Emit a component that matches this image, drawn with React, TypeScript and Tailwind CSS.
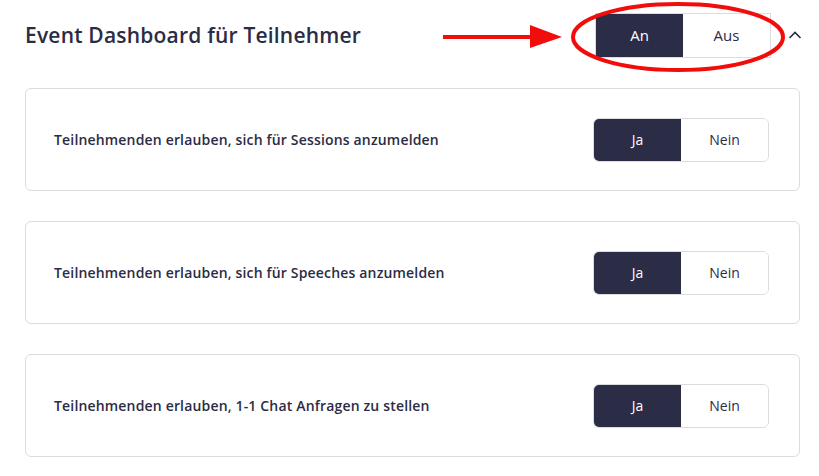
import React from "react";

const options = [
  "Teilnehmenden erlauben, sich für Sessions anzumelden",
  "Teilnehmenden erlauben, sich für Speeches anzumelden",
  "Teilnehmenden erlauben, 1-1 Chat Anfragen zu stellen",
];

function Toggle({ on, off }: { on: string; off: string }) {
  return (
    <div className="flex h-[44px] w-[176px] border border-[#dcdcdc] rounded-[6px] overflow-hidden text-[14px]">
      <button className="flex-1 bg-[#2b2c45] text-white">{on}</button>
      <button className="flex-1 bg-white text-[#2b2c45]">{off}</button>
    </div>
  );
}

export default function App() {
  return (
    <div className="relative min-h-screen bg-white pl-[25px] pr-[19px] pt-[13px] font-['Open_Sans',sans-serif] text-[#2b2c45]">
      {/* header */}
      <div className="flex items-center h-[45px]">
        <h1 className="text-[21px] font-semibold tracking-[0.2px]">Event Dashboard für Teilnehmer</h1>
        <div className="ml-auto flex items-center">
          <div className="flex h-[45px] w-[176px] border border-[#dcdcdc] text-[15px]">
            <button className="flex-1 bg-[#2b2c45] text-white">An</button>
            <button className="flex-1 bg-white text-[#2b2c45]">Aus</button>
          </div>
          <svg width="14" height="10" viewBox="0 0 14 10" className="ml-[17px] mr-[-2px] mb-[2px]">
            <path d="M1.5 8 L7 2.5 L12.5 8" fill="none" stroke="#2b2c45" strokeWidth="1.6" />
          </svg>
        </div>
      </div>

      {/* cards */}
      <div className="mt-[30px] flex flex-col gap-[30px]">
        {options.map((label) => (
          <div
            key={label}
            className="flex items-center justify-between h-[103px] rounded-[6px] border border-[#dcdcdc] pl-[28px] pr-[30px]"
          >
            <span className="text-[14px] font-semibold tracking-[0.17px]">{label}</span>
            <Toggle on="Ja" off="Nein" />
          </div>
        ))}
      </div>

      {/* annotation overlay */}
      <svg className="absolute left-0 top-0 pointer-events-none" width="819" height="90">
        <line x1="443" y1="37" x2="532" y2="37" stroke="#f20d0d" strokeWidth="4" />
        <polygon points="530,25 562,37 530,48" fill="#f20d0d" />
        <ellipse cx="678" cy="37" rx="105" ry="33" fill="none" stroke="#f20d0d" strokeWidth="4" />
      </svg>
    </div>
  );
}
